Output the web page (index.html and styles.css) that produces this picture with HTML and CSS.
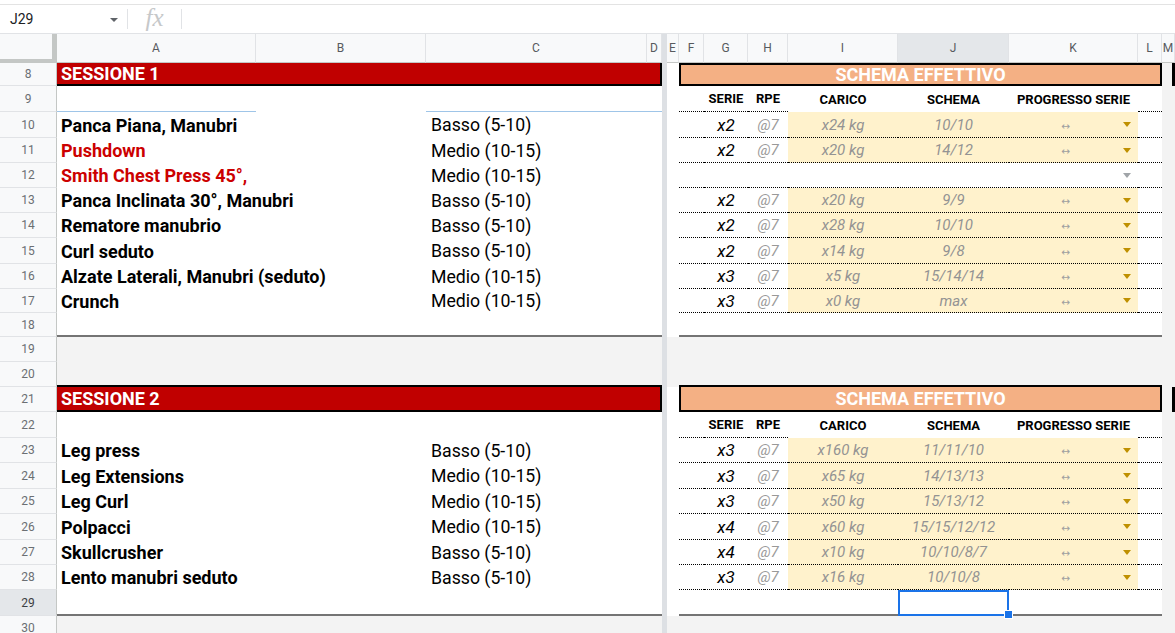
FILE: index.html
```html
<!DOCTYPE html>
<html lang="it">
<head>
<meta charset="utf-8">
<title>Foglio</title>
<link rel="stylesheet" href="styles.css">
</head>
<body>
<div class="fbar">
  <div class="namebox"><span>J29</span><i class="caret"></i></div>
  <div class="sep"></div>
  <div class="fx">fx</div>
  <div class="sep"></div>
</div>

<div class="row colhdr">
  <div class="corner"></div>
  <div class="ch">A</div><div class="ch">B</div><div class="ch">C</div><div class="ch">D</div>
  <div class="fz"></div>
  <div class="ch">E</div><div class="ch">F</div><div class="ch">G</div><div class="ch">H</div>
  <div class="ch">I</div><div class="ch sel">J</div><div class="ch">K</div><div class="ch">L</div><div class="ch">M</div>
</div>

<!-- 8 -->
<div class="row h23">
  <div class="rn">8</div>
  <div class="c sess">SESSIONE 1</div>
  <div class="fz"></div><div class="c"></div>
  <div class="c sch top">SCHEMA EFFETTIVO</div>
  <div class="c m mbar"></div>
</div>
<!-- 9 -->
<div class="row h26">
  <div class="rn">9</div>
  <div class="c blue"></div><div class="c"></div><div class="c blue s2"></div>
  <div class="fz"></div><div class="c"></div>
  <div class="c d"></div><div class="c d hd">SERIE</div><div class="c d hd">RPE</div>
  <div class="c hd">CARICO</div><div class="c hd">SCHEMA</div><div class="c hd">PROGRESSO SERIE</div>
  <div class="c d"></div><div class="c m"></div>
</div>
<!-- 10 -->
<div class="row h26">
  <div class="rn">10</div>
  <div class="c nm s2">Panca Piana, Manubri</div><div class="c ct s2">Basso (5-10)</div>
  <div class="fz"></div><div class="c"></div>
  <div class="c d"></div><div class="c d sr">x2</div><div class="c d rpe">@7</div>
  <div class="c d y v">x24 kg</div><div class="c d y v">10/10</div>
  <div class="c d y k"><span class="ar">↔</span><i class="dd"></i></div>
  <div class="c d"></div><div class="c m"></div>
</div>
<!-- 11 -->
<div class="row h25">
  <div class="rn">11</div>
  <div class="c nm red s2">Pushdown</div><div class="c ct s2">Medio (10-15)</div>
  <div class="fz"></div><div class="c"></div>
  <div class="c d"></div><div class="c d sr">x2</div><div class="c d rpe">@7</div>
  <div class="c d y v">x20 kg</div><div class="c d y v">14/12</div>
  <div class="c d y k"><span class="ar">↔</span><i class="dd"></i></div>
  <div class="c d"></div><div class="c m"></div>
</div>
<!-- 12 -->
<div class="row h25">
  <div class="rn">12</div>
  <div class="c nm red s2">Smith Chest Press 45°,</div><div class="c ct s2">Medio (10-15)</div>
  <div class="fz"></div><div class="c"></div>
  <div class="c d"></div><div class="c d"></div><div class="c d"></div>
  <div class="c d"></div><div class="c d"></div>
  <div class="c d k"><span class="ar"></span><i class="dd gray"></i></div>
  <div class="c d"></div><div class="c m"></div>
</div>
<!-- 13 -->
<div class="row h25">
  <div class="rn">13</div>
  <div class="c nm s2">Panca Inclinata 30°, Manubri</div><div class="c ct s2">Basso (5-10)</div>
  <div class="fz"></div><div class="c"></div>
  <div class="c d"></div><div class="c d sr">x2</div><div class="c d rpe">@7</div>
  <div class="c d y v">x20 kg</div><div class="c d y v">9/9</div>
  <div class="c d y k"><span class="ar">↔</span><i class="dd"></i></div>
  <div class="c d"></div><div class="c m"></div>
</div>
<!-- 14 -->
<div class="row h25">
  <div class="rn">14</div>
  <div class="c nm s2">Rematore manubrio</div><div class="c ct s2">Basso (5-10)</div>
  <div class="fz"></div><div class="c"></div>
  <div class="c d"></div><div class="c d sr">x2</div><div class="c d rpe">@7</div>
  <div class="c d y v">x28 kg</div><div class="c d y v">10/10</div>
  <div class="c d y k"><span class="ar">↔</span><i class="dd"></i></div>
  <div class="c d"></div><div class="c m"></div>
</div>
<!-- 15 -->
<div class="row h26">
  <div class="rn">15</div>
  <div class="c nm s2">Curl seduto</div><div class="c ct s2">Basso (5-10)</div>
  <div class="fz"></div><div class="c"></div>
  <div class="c d"></div><div class="c d sr">x2</div><div class="c d rpe">@7</div>
  <div class="c d y v">x14 kg</div><div class="c d y v">9/8</div>
  <div class="c d y k"><span class="ar">↔</span><i class="dd"></i></div>
  <div class="c d"></div><div class="c m"></div>
</div>
<!-- 16 -->
<div class="row h25">
  <div class="rn">16</div>
  <div class="c nm s2">Alzate Laterali, Manubri (seduto)</div><div class="c ct s2">Medio (10-15)</div>
  <div class="fz"></div><div class="c"></div>
  <div class="c d"></div><div class="c d sr">x3</div><div class="c d rpe">@7</div>
  <div class="c d y v">x5 kg</div><div class="c d y v">15/14/14</div>
  <div class="c d y k"><span class="ar">↔</span><i class="dd"></i></div>
  <div class="c d"></div><div class="c m"></div>
</div>
<!-- 17 -->
<div class="row h24">
  <div class="rn">17</div>
  <div class="c nm s2">Crunch</div><div class="c ct s2">Medio (10-15)</div>
  <div class="fz"></div><div class="c"></div>
  <div class="c d"></div><div class="c d sr">x3</div><div class="c d rpe">@7</div>
  <div class="c d y v">x0 kg</div><div class="c d y v">max</div>
  <div class="c d y k"><span class="ar">↔</span><i class="dd"></i></div>
  <div class="c d"></div><div class="c m"></div>
</div>
<!-- 18 -->
<div class="row h24">
  <div class="rn">18</div>
  <div class="c sb s4"></div>
  <div class="fz"></div><div class="c"></div>
  <div class="c sb s7"></div><div class="c m"></div>
</div>
<!-- 19 -->
<div class="row h25">
  <div class="rn">19</div>
  <div class="c g s4"></div>
  <div class="fz"></div><div class="c g"></div>
  <div class="c g s7"></div><div class="c m"></div>
</div>
<!-- 20 -->
<div class="row h25">
  <div class="rn">20</div>
  <div class="c g s4 bk"></div>
  <div class="fz"></div><div class="c g"></div>
  <div class="c g s7 bk"></div><div class="c m"></div>
</div>
<!-- 21 -->
<div class="row h25">
  <div class="rn">21</div>
  <div class="c sess">SESSIONE 2</div>
  <div class="fz"></div><div class="c"></div>
  <div class="c sch">SCHEMA EFFETTIVO</div>
  <div class="c m mbar"></div>
</div>
<!-- 22 -->
<div class="row h26">
  <div class="rn">22</div>
  <div class="c s2"></div><div class="c s2"></div>
  <div class="fz"></div><div class="c"></div>
  <div class="c d"></div><div class="c d hd">SERIE</div><div class="c d hd">RPE</div>
  <div class="c hd">CARICO</div><div class="c hd">SCHEMA</div><div class="c hd">PROGRESSO SERIE</div>
  <div class="c d"></div><div class="c m"></div>
</div>
<!-- 23 -->
<div class="row h25">
  <div class="rn">23</div>
  <div class="c nm s2">Leg press</div><div class="c ct s2">Basso (5-10)</div>
  <div class="fz"></div><div class="c"></div>
  <div class="c d"></div><div class="c d sr">x3</div><div class="c d rpe">@7</div>
  <div class="c d y v">x160 kg</div><div class="c d y v">11/11/10</div>
  <div class="c d y k"><span class="ar">↔</span><i class="dd"></i></div>
  <div class="c d"></div><div class="c m"></div>
</div>
<!-- 24 -->
<div class="row h26">
  <div class="rn">24</div>
  <div class="c nm s2">Leg Extensions</div><div class="c ct s2">Medio (10-15)</div>
  <div class="fz"></div><div class="c"></div>
  <div class="c d"></div><div class="c d sr">x3</div><div class="c d rpe">@7</div>
  <div class="c d y v">x65 kg</div><div class="c d y v">14/13/13</div>
  <div class="c d y k"><span class="ar">↔</span><i class="dd"></i></div>
  <div class="c d"></div><div class="c m"></div>
</div>
<!-- 25 -->
<div class="row h25">
  <div class="rn">25</div>
  <div class="c nm s2">Leg Curl</div><div class="c ct s2">Medio (10-15)</div>
  <div class="fz"></div><div class="c"></div>
  <div class="c d"></div><div class="c d sr">x3</div><div class="c d rpe">@7</div>
  <div class="c d y v">x50 kg</div><div class="c d y v">15/13/12</div>
  <div class="c d y k"><span class="ar">↔</span><i class="dd"></i></div>
  <div class="c d"></div><div class="c m"></div>
</div>
<!-- 26 -->
<div class="row h26">
  <div class="rn">26</div>
  <div class="c nm s2">Polpacci</div><div class="c ct s2">Medio (10-15)</div>
  <div class="fz"></div><div class="c"></div>
  <div class="c d"></div><div class="c d sr">x4</div><div class="c d rpe">@7</div>
  <div class="c d y v">x60 kg</div><div class="c d y v">15/15/12/12</div>
  <div class="c d y k"><span class="ar">↔</span><i class="dd"></i></div>
  <div class="c d"></div><div class="c m"></div>
</div>
<!-- 27 -->
<div class="row h25">
  <div class="rn">27</div>
  <div class="c nm s2">Skullcrusher</div><div class="c ct s2">Basso (5-10)</div>
  <div class="fz"></div><div class="c"></div>
  <div class="c d"></div><div class="c d sr">x4</div><div class="c d rpe">@7</div>
  <div class="c d y v">x10 kg</div><div class="c d y v">10/10/8/7</div>
  <div class="c d y k"><span class="ar">↔</span><i class="dd"></i></div>
  <div class="c d"></div><div class="c m"></div>
</div>
<!-- 28 -->
<div class="row h25">
  <div class="rn">28</div>
  <div class="c nm s2">Lento manubri seduto</div><div class="c ct s2">Basso (5-10)</div>
  <div class="fz"></div><div class="c"></div>
  <div class="c d"></div><div class="c d sr">x3</div><div class="c d rpe">@7</div>
  <div class="c d y v">x16 kg</div><div class="c d y v">10/10/8</div>
  <div class="c d y k"><span class="ar">↔</span><i class="dd"></i></div>
  <div class="c d"></div><div class="c m"></div>
</div>
<!-- 29 -->
<div class="row h26">
  <div class="rn sel">29</div>
  <div class="c sb s4"></div>
  <div class="fz"></div><div class="c"></div>
  <div class="c sb"></div><div class="c sb"></div><div class="c sb"></div><div class="c sb"></div>
  <div class="c sb active"><span class="selbox"></span><span class="handle"></span></div>
  <div class="c sb"></div><div class="c sb"></div><div class="c m"></div>
</div>
<!-- 30 -->
<div class="row h25">
  <div class="rn">30</div>
  <div class="c g s4"></div>
  <div class="fz"></div><div class="c g"></div>
  <div class="c g s7"></div><div class="c m"></div>
</div>
</body>
</html>
```

FILE: styles.css
```css
html, body {
  margin: 0;
  padding: 0;
}
body {
  width: 1175px;
  height: 633px;
  overflow: hidden;
  background: #fff;
  font-family: Roboto, "Liberation Sans", Arial, sans-serif;
  color: #000;
}

/* formula bar */
.fbar {
  margin-top: 4px;
  height: 29px;
  border-top: 1px solid #e3e3e3;
  box-sizing: border-box;
  display: flex;
  align-items: center;
}
.namebox {
  width: 127px;
  box-sizing: border-box;
  padding: 0 9px 0 10px;
  display: flex;
  align-items: center;
  justify-content: space-between;
  font-size: 14px;
  color: #202124;
}
.caret {
  width: 0;
  height: 0;
  border-left: 4px solid transparent;
  border-right: 4px solid transparent;
  border-top: 4px solid #5f6368;
  margin-top: 2px;
}
.sep {
  width: 1px;
  height: 20px;
  background: #e1e3e6;
}
.fx {
  width: 53px;
  text-align: center;
  font-family: "Liberation Serif", "DejaVu Serif", serif;
  font-style: italic;
  font-size: 25px;
  color: #c6c8ca;
  line-height: 1;
  margin-top: -3px;
}

/* grid rows */
.row {
  display: grid;
  grid-template-columns: 57px 199px 170px 221px 15px 5px 12px 25px 44px 40px 110px 111px 129px 24px 13px;
}
.h23 { height: 23px; }
.h24 { height: 24px; }
.h25 { height: 25px; }
.h26 { height: 26px; }

.colhdr {
  height: 30px;
  background: #f8f9fa;
  border-top: 1px solid #e1e3e6;
  box-sizing: border-box;
}
.corner {
  background: #f8f9fa;
  border-right: 5px solid #c4c7c5;
  border-bottom: 4px solid #c4c7c5;
  box-sizing: border-box;
}
.ch {
  display: flex;
  align-items: center;
  justify-content: center;
  font-size: 12px;
  color: #575a5e;
  border-right: 1px solid #e1e3e6;
  border-bottom: 1px solid #c4c7c5;
  box-sizing: border-box;
  overflow: hidden;
}
.ch.sel { background: #e4e7ea; }

.rn {
  background: #f8f9fa;
  border-right: 1px solid #c4c7c5;
  border-bottom: 1px solid #e1e3e6;
  box-sizing: border-box;
  display: flex;
  align-items: center;
  justify-content: center;
  font-size: 12px;
  color: #6b6f73;
}
.rn.sel { background: #e4e7ea; color: #3c4043; }

.fz { background: #dde0e4; }

.c {
  box-sizing: border-box;
  display: flex;
  align-items: center;
  min-width: 0;
  white-space: nowrap;
  overflow: hidden;
}
.s2 { grid-column: span 2; }
.s4 { grid-column: span 4; }
.s7 { grid-column: span 7; }

.m { background: #f3f3f3; }
.mbar { border-right: 3px solid #000; }
.g { background: #f3f3f3; }
.bk { border-bottom: 2px solid #000; }
.sb { border-bottom: 2px solid #747474; }
.blue { border-bottom: 1px solid #9fc5e8; }

/* section bars */
.sess {
  grid-column: span 4;
  background: #c00000;
  color: #fff;
  font-weight: 700;
  font-size: 18px;
  padding-left: 4px;
  border-right: 2px solid #000;
  border-bottom: 2px solid #000;
}
.sch {
  grid-column: span 7;
  background: #f4b084;
  color: #fff;
  font-weight: 700;
  font-size: 18px;
  justify-content: center;
  border-left: 2px solid #000;
  border-right: 2px solid #000;
  border-bottom: 2px solid #000;
}
.sch.top { border-top: 2px solid #000; }

/* left table */
.nm {
  padding-left: 4px;
  font-weight: 700;
  font-size: 18px;
}
.red { color: #cc0000; }
.ct {
  padding-left: 5px;
  font-size: 17.7px;
}

/* right table */
.d { border-bottom: 1px dotted #000; }
.y { background: #fff2cc; }
.hd {
  justify-content: center;
  font-weight: 700;
  font-size: 13px;
}
.sr {
  justify-content: center;
  font-style: italic;
  font-size: 17px;
}
.rpe {
  justify-content: center;
  font-style: italic;
  font-size: 15px;
  color: #999;
}
.v {
  justify-content: center;
  font-style: italic;
  font-size: 15px;
  color: #939393;
}
.k { padding-right: 7px; }
.ar {
  flex: 1;
  text-align: center;
  font-family: "DejaVu Sans", sans-serif;
  font-size: 10.5px;
  color: #a0a0a0;
  padding-top: 2px;
}
.dd {
  width: 0;
  height: 0;
  border-left: 4.5px solid transparent;
  border-right: 4.5px solid transparent;
  border-top: 5px solid #bf9000;
}
.dd.gray { border-top-color: #a0a4a8; }

/* active cell */
.active {
  position: relative;
  overflow: visible;
}
.selbox {
  position: absolute;
  left: 0;
  top: 0;
  right: 0;
  bottom: -2px;
  border: 2px solid #1a73e8;
}
.handle {
  position: absolute;
  right: -4px;
  bottom: -5px;
  width: 7px;
  height: 7px;
  background: #1a73e8;
  border: 1px solid #fff;
  z-index: 2;
}
```
